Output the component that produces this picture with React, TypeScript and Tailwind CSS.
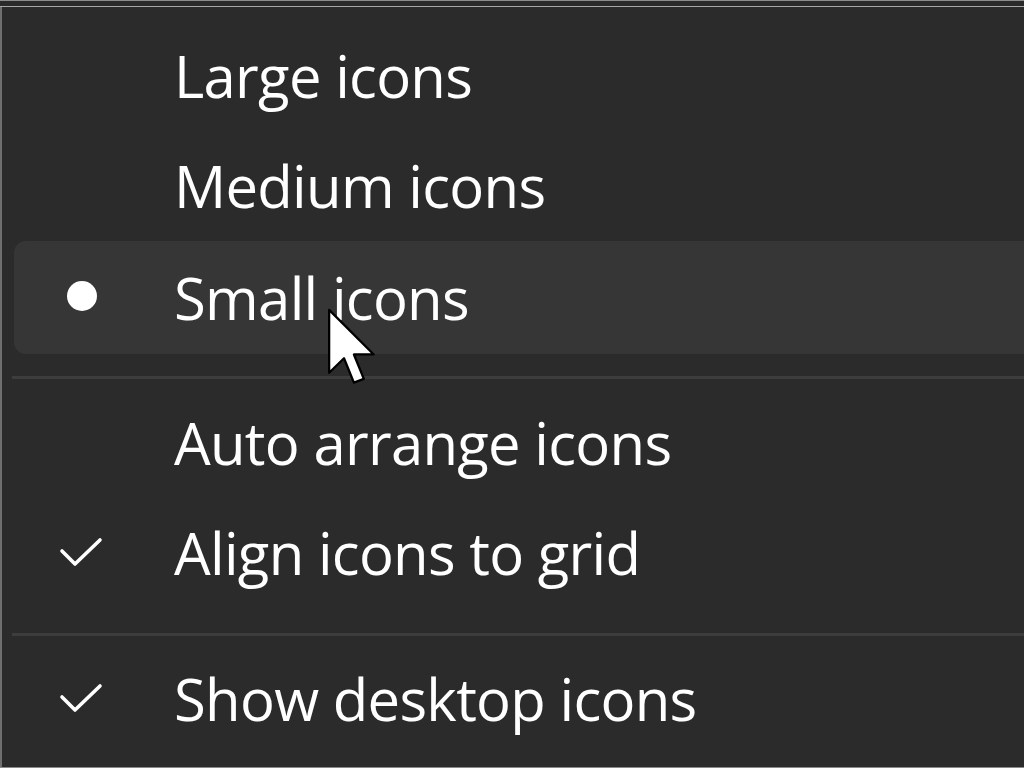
import React from "react";

type Item = {
  label: string;
  mark?: "dot" | "check";
  active?: boolean;
};

const groups: Item[][] = [
  [
    { label: "Large icons" },
    { label: "Medium icons" },
    { label: "Small icons", mark: "dot", active: true },
  ],
  [
    { label: "Auto arrange icons" },
    { label: "Align icons to grid", mark: "check" },
  ],
  [{ label: "Show desktop icons", mark: "check" }],
];

function Check() {
  return (
    <svg width="44" height="32" viewBox="0 0 44 32" fill="none">
      <path
        d="M3 14 L16 27 L41 3"
        stroke="#ffffff"
        strokeWidth="3.6"
        strokeLinecap="round"
        strokeLinejoin="round"
      />
    </svg>
  );
}

function Cursor() {
  return (
    <svg
      className="pointer-events-none absolute left-[326px] top-[308px]"
      width="52"
      height="80"
      viewBox="0 0 13 21"
    >
      <path
        d="M0.5 0.5 L0.5 17 L4.4 13.2 L7 19.6 L9.6 18.6 L7 12.2 L12.2 12.2 Z"
        fill="#ffffff"
        stroke="#000000"
        strokeWidth="0.6"
        strokeLinejoin="round"
      />
    </svg>
  );
}

function Row({ item }: { item: Item }) {
  return (
    <div
      className={
        item.active
          ? "ml-[12px] flex h-[113px] items-center rounded-l-[12px] bg-[#363636]"
          : "flex h-[110px] items-center"
      }
    >
      <div
        className={
          item.active
            ? "flex w-[160px] items-center justify-center pr-[25px]"
            : "flex w-[172px] items-center justify-center pl-[14px] pr-[28px]"
        }
      >
        {item.mark === "dot" && (
          <span className="mt-[-4px] block h-[30px] w-[30px] rounded-full bg-white" />
        )}
        {item.mark === "check" && <Check />}
      </div>
      <span className="text-[58px] leading-none tracking-[-0.7px] text-white">
        {item.label}
      </span>
    </div>
  );
}

export default function App() {
  return (
    <div
      className="relative h-[768px] w-[1024px] overflow-hidden bg-[#2b2b2b]"
      style={{ fontFamily: '"Open Sans", "Noto Sans", sans-serif' }}
    >
      <div className="h-[1px] bg-[#8c8c8c]" />
      <div className="h-[5px] bg-[#2a2a2a]" />
      <div className="h-[1px] bg-[#a6a6a6]" />

      <div className="flex h-[760px] border-l-2 border-[#6f6f6f]">
        <div className="flex flex-1 flex-col pt-[14px]">
          {groups.map((group, gi) => (
            <div key={gi}>
              {gi > 0 && (
                <div
                  className={
                    gi === 1
                      ? "ml-[10px] mt-[22px] mb-[9px] h-[3px] bg-[#3d3d3d]"
                      : "ml-[10px] mt-[25px] mb-[8px] h-[3px] bg-[#3d3d3d]"
                  }
                />
              )}
              {group.map((item) => (
                <Row key={item.label} item={item} />
              ))}
            </div>
          ))}
        </div>
      </div>
      <div className="h-[1px] bg-[#8a8a8a]" />

      <Cursor />
    </div>
  );
}
